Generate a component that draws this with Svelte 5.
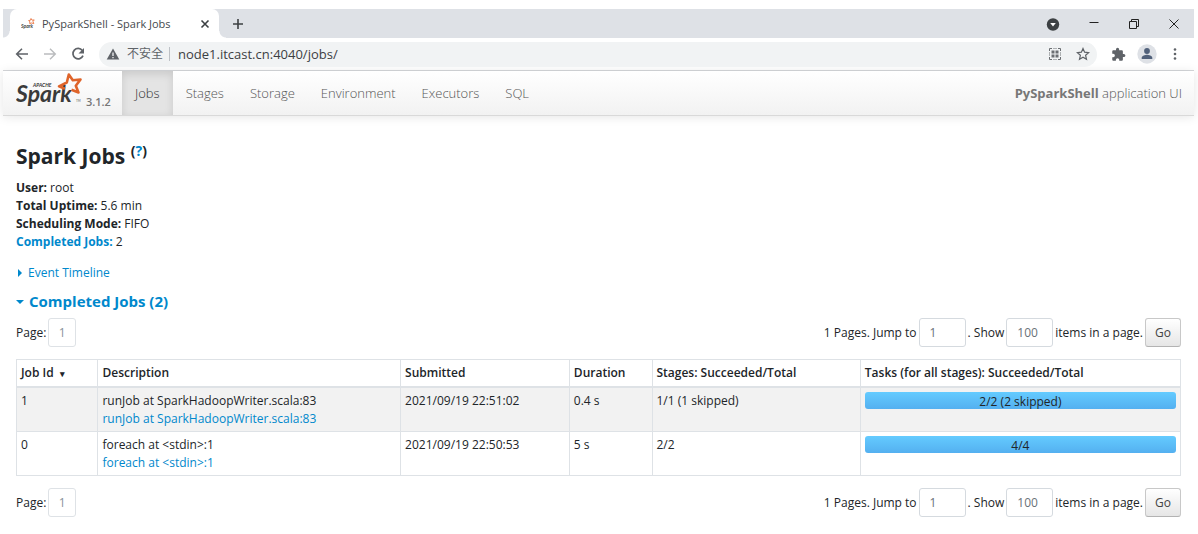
<script>
	const navItems = ['Jobs', 'Stages', 'Storage', 'Environment', 'Executors', 'SQL'];

	const summary = [
		{ label: 'User:', value: 'root' },
		{ label: 'Total Uptime:', value: '5.6 min' },
		{ label: 'Scheduling Mode:', value: 'FIFO' },
		{ label: 'Completed Jobs:', value: '2', link: true }
	];

	const jobs = [
		{
			id: 1,
			description: 'runJob at SparkHadoopWriter.scala:83',
			submitted: '2021/09/19 22:51:02',
			duration: '0.4 s',
			stages: '1/1 (1 skipped)',
			tasks: '2/2 (2 skipped)',
			progress: 100
		},
		{
			id: 0,
			description: 'foreach at <stdin>:1',
			submitted: '2021/09/19 22:50:53',
			duration: '5 s',
			stages: '2/2',
			tasks: '4/4',
			progress: 100
		}
	];

	let active = $state('Jobs');
	let address = $state('node1.itcast.cn:4040/jobs/');
</script>

{#snippet pager(where)}
	<div class="pager">
		<div class="pages">
			<span>Page:</span>
			<a class="pageLink" href="#page">1</a>
		</div>
		<form class="jump" onsubmit={(e) => e.preventDefault()}>
			<label for="jump-{where}">1 Pages. Jump to</label>
			<input id="jump-{where}" type="text" value="1" />
			<label for="size-{where}">. Show</label>
			<input id="size-{where}" type="text" value="100" />
			<span>items in a page.</span>
			<button class="go">Go</button>
		</form>
	</div>
{/snippet}

<div class="window">
	<header class="tabStrip">
		<div class="edge left"></div>
		<div class="tab">
			<svg viewBox="0 0 14 14" width="14" height="14">
				<text class="faviconText" x="0" y="11">Spark</text>
				<path d="M10 1.500l1 1.700 2.200-.3-1.200 1.700.8 2-2.300-.6-1.800.6.200-1.800-1.300-1.200 1.900-.4z" fill="none" stroke="#ec8152" />
			</svg>
			<span class="tabTitle">PySparkShell - Spark Jobs</span>
			<button class="iconBtn" aria-label="Close tab">
				<svg viewBox="0 0 10 10" width="10" height="10"><path d="M1.500 1.500l7 7M8.500 1.500l-7 7" stroke="#3c4043" stroke-width="1.600" /></svg>
			</button>
		</div>
		<div class="edge right"></div>
		<button class="iconBtn newTab" aria-label="New tab">
			<svg viewBox="0 0 12 12" width="12" height="12"><path d="M6 1v10M1 6h10" stroke="#3c4043" stroke-width="1.600" /></svg>
		</button>
		<div class="windowButtons">
			<button class="iconBtn" aria-label="Search tabs">
				<svg viewBox="0 0 14 14" width="14" height="14"><circle cx="7" cy="7.500" r="6.200" fill="#3c4043" /><path d="M4.200 6h5.600L7 9.500z" fill="#fff" /></svg>
			</button>
			<button class="iconBtn" aria-label="Minimize">
				<svg viewBox="0 0 12 12" width="12" height="12"><path d="M1.500 4.500h9" stroke="#222" /></svg>
			</button>
			<button class="iconBtn" aria-label="Restore">
				<svg viewBox="0 0 12 12" width="12" height="12" fill="none" stroke="#222"><path d="M1.500 3.500h7v7h-7zM3.500 3.500v-2h7v7h-2" /></svg>
			</button>
			<button class="iconBtn" aria-label="Close">
				<svg viewBox="0 0 12 12" width="12" height="12"><path d="M1.500 1.500l9 9M10.500 1.500l-9 9" stroke="#222" /></svg>
			</button>
		</div>
	</header>

	<div class="toolbar">
		<button class="iconBtn" aria-label="Back">
			<svg viewBox="0 0 14 14" width="14" height="14" fill="none" stroke="#5f6368" stroke-width="1.600"><path d="M13 7H2M7 1.700L1.700 7 7 12.300" /></svg>
		</button>
		<button class="iconBtn" aria-label="Forward">
			<svg viewBox="0 0 14 14" width="14" height="14" fill="none" stroke="#babcbe" stroke-width="1.400"><path d="M1 7h11M7 1.700L12.300 7 7 12.300" /></svg>
		</button>
		<button class="iconBtn" aria-label="Reload">
			<svg viewBox="0 0 14 14" width="14" height="14"><path d="M11.300 3.500A5.200 5.200 0 1 0 12 8.600" fill="none" stroke="#5f6368" stroke-width="1.700" /><path d="M13 1v5.500H7.500z" fill="#5f6368" /></svg>
		</button>
		<div class="addressBar">
			<svg viewBox="0 0 14 14" width="14" height="14"><path d="M7 1.500L13.300 12.500H.7z" fill="#5f6368" /><path d="M7 5.500v3.500M7 10v1.300" stroke="#f1f3f4" stroke-width="1.300" /></svg>
			<span class="insecure">不安全</span>
			<input class="url" type="text" aria-label="Address" bind:value={address} />
			<button class="iconBtn" aria-label="QR code">
				<svg viewBox="0 0 14 14" width="14" height="14" fill="none" stroke="#6b6e72"><path d="M1.500 4V1.500H4M10 1.500h2.500V4M12.500 10v2.500H10M4 12.500H1.500V10" /><path d="M5.500 1.500h3M5.500 12.500h3M1.500 5.500v3M12.500 5.500v3" stroke-dasharray="1 1" /><path d="M3.500 3.500h3v3h-3zM7.500 3.500h3v3h-3zM3.500 7.500h3v3h-3zM7.500 7.500h3v3h-3z" fill="#6b6e72" stroke="none" /></svg>
			</button>
			<button class="iconBtn" aria-label="Bookmark">
				<svg viewBox="0 0 14 14" width="14" height="14"><path d="M7 1.500l1.600 3.700 4 .4-3 2.700.9 4L7 10.200l-3.500 2.100.9-4-3-2.700 4-.4z" fill="none" stroke="#5f6368" stroke-width="1.200" /></svg>
			</button>
		</div>
		<div class="extras">
			<button class="iconBtn" aria-label="Extensions">
				<svg viewBox="0 0 24 24" width="15" height="15"><path d="M20.500 11H19V7c0-1.100-.9-2-2-2h-4V3.500a2.500 2.500 0 0 0-5 0V5H4c-1.100 0-2 .9-2 2v3.800h1.500a2.700 2.700 0 0 1 0 5.400H2V20c0 1.100.9 2 2 2h3.800v-1.500a2.700 2.700 0 0 1 5.400 0V22H17c1.100 0 2-.9 2-2v-4h1.500a2.500 2.500 0 0 0 0-5z" fill="#5f6368" /></svg>
			</button>
			<button class="iconBtn" aria-label="Profile">
				<svg viewBox="0 0 20 20" width="20" height="20"><circle cx="10" cy="10" r="9.700" fill="#dee1e6" /><circle cx="10" cy="7" r="2.900" fill="#50607a" /><path d="M4.700 15v-1.300c0-2 3.500-3 5.300-3s5.300 1 5.300 3V15z" fill="#50607a" /></svg>
			</button>
			<button class="iconBtn" aria-label="Menu">
				<svg viewBox="0 0 14 14" width="14" height="14" fill="#5f6368"><circle cx="7" cy="2.500" r="1.300" /><circle cx="7" cy="7" r="1.300" /><circle cx="7" cy="11.500" r="1.300" /></svg>
			</button>
		</div>
	</div>

	<nav class="navbar">
		<a class="brand" href="#home">
			<svg viewBox="0 0 68 42" width="68" height="42">
				<text class="apache" x="17" y="16">APACHE</text>
				<text class="spark" x="0" y="31">Spark</text>
				<path
					d="M49 17.800L43 15.300 50.800 11.500 52.800 3.500 56.800 9.300 64.500 8.500 59.800 14.800 62.500 21.500 55.500 18.800"
					fill="none"
					stroke="#df642a"
					stroke-width="2.600"
					stroke-linejoin="round"
				/>
				<text class="tm" x="60" y="31">TM</text>
			</svg>
			<span class="version">3.1.2</span>
		</a>
		{#each navItems as item}
			<a class="navItem" class:active={active === item} href="#{item}" onclick={() => (active = item)}>{item}</a>
		{/each}
		<p class="appName"><strong>PySparkShell</strong> application UI</p>
	</nav>

	<main>
		<h3>Spark Jobs <sup>(<a href="#help">?</a>)</sup></h3>
		<ul class="summary">
			{#each summary as row}
				<li>
					{#if row.link}<a href="#completed"><strong>{row.label}</strong></a>{:else}<strong>{row.label}</strong>{/if}
					{row.value}
				</li>
			{/each}
		</ul>

		<a class="timeline" href="#timeline">
			<svg viewBox="0 0 8 8" width="8" height="8"><path d="M2 0l4 4-4 4z" fill="#0088cc" /></svg>
			Event Timeline
		</a>
		<h4>
			<a href="#completed">
				<svg viewBox="0 0 8 8" width="8" height="8"><path d="M0 3h8L4 7z" fill="#0088cc" /></svg>
				Completed Jobs (2)
			</a>
		</h4>

		{@render pager('top')}

		<table>
			<colgroup>
				<col class="colId" />
				<col class="colDescription" />
				<col class="colSubmitted" />
				<col class="colDuration" />
				<col class="colStages" />
				<col />
			</colgroup>
			<thead>
				<tr>
					<th>Job Id <span class="sort">▾</span></th>
					<th>Description</th>
					<th>Submitted</th>
					<th>Duration</th>
					<th>Stages: Succeeded/Total</th>
					<th>Tasks (for all stages): Succeeded/Total</th>
				</tr>
			</thead>
			<tbody>
				{#each jobs as job}
					<tr>
						<td>{job.id}</td>
						<td>{job.description}<br /><a href="#job-{job.id}">{job.description}</a></td>
						<td>{job.submitted}</td>
						<td>{job.duration}</td>
						<td>{job.stages}</td>
						<td>
							<div class="progress">
								<div class="bar" style="width: {job.progress}%"></div>
								<span>{job.tasks}</span>
							</div>
						</td>
					</tr>
				{/each}
			</tbody>
		</table>

		{@render pager('bottom')}
	</main>
</div>

<style>
	:global(body) {
		margin: 0;
		background: #fff;
	}

	.window {
		padding: 9px 4px 0 3px;
		font: 12px/18px 'Open Sans', 'Noto Sans CJK SC', sans-serif;
		color: #212529;
	}

	a {
		color: #0088cc;
		text-decoration: none;
	}

	button,
	input {
		font: inherit;
		color: inherit;
		box-sizing: border-box;
	}

	svg {
		display: block;
		flex: none;
	}

	.iconBtn {
		display: flex;
		padding: 0;
		border: 0;
		background: none;
	}

	/* browser chrome */
	.tabStrip {
		display: flex;
		align-items: center;
		height: 29px;
		background: #dee1e6;
	}

	/* the flared feet of the tab */
	.edge {
		align-self: flex-end;
		width: 7px;
		height: 7px;
	}

	.edge.left {
		background: radial-gradient(circle at 0 0, #dee1e6 6px, #fff 7px);
	}

	.edge.right {
		background: radial-gradient(circle at 100% 0, #dee1e6 6px, #fff 7px);
	}

	.tab {
		display: flex;
		align-items: center;
		align-self: stretch;
		box-sizing: border-box;
		width: 209px;
		padding: 0 9px 0 11px;
		background: #fff;
		border-radius: 7px 7px 0 0;
	}

	.faviconText {
		font: italic 700 5px Lato, sans-serif;
		fill: #444;
	}

	.tabTitle {
		flex: 1;
		margin-left: 7px;
		font-size: 11px;
		color: #45494d;
		white-space: nowrap;
	}

	.newTab {
		margin-left: 6px;
	}

	.windowButtons {
		display: flex;
		align-items: center;
		gap: 28px;
		margin-left: auto;
		padding-right: 14px;
	}

	.toolbar {
		display: flex;
		align-items: center;
		gap: 14px;
		height: 32px;
		padding: 0 12px;
		border-bottom: 1px solid #d5d7da;
	}

	.addressBar {
		display: flex;
		flex: 1;
		align-items: center;
		gap: 14px;
		height: 25px;
		padding: 0 7px;
		border-radius: 13px;
		background: #f1f3f4;
	}

	.insecure {
		margin-left: -7px;
		padding-right: 6px;
		border-right: 1px solid #bdc1c6;
		line-height: 14px;
		color: #5f6368;
	}

	.url {
		flex: 1;
		min-width: 0;
		margin-left: -6px;
		padding: 0;
		border: 0;
		background: none;
		font-size: 13px;
		color: #3c4043;
	}

	.extras {
		display: flex;
		align-items: center;
		gap: 11px;
	}

	/* spark navbar */
	.navbar {
		display: flex;
		align-items: stretch;
		height: 44px;
		background: linear-gradient(#fff, #f2f2f2);
		border-bottom: 1px solid #d9d9d9;
		box-shadow: 0 1px 10px rgba(0, 0, 0, 0.1);
		font-size: 13px;
		color: #777;
	}

	.brand {
		display: flex;
		box-sizing: border-box;
		width: 119px;
		padding-left: 13px;
	}

	.apache {
		font: italic 700 5px Lato, sans-serif;
		fill: #333;
	}

	.spark {
		font: italic 700 23px Lato, sans-serif;
		fill: #3a3a3a;
	}

	.tm {
		font: 3px Lato, sans-serif;
		fill: #555;
	}

	.version {
		margin: 22px 0 0 2px;
		font-size: 11px;
		font-weight: 600;
		color: #777;
	}

	.navItem {
		padding: 0 13px;
		font-weight: 300;
		line-height: 45px;
		color: #555;
	}

	.navItem.active {
		background: #e4e4e4;
		box-shadow: inset 0 3px 8px rgba(0, 0, 0, 0.12);
		color: #333;
	}

	.appName {
		margin: 0 12px 0 auto;
		font-weight: 300;
		line-height: 45px;
		color: #555;
	}

	.appName strong {
		font-weight: 700;
		color: #777;
	}

	/* page */
	main {
		padding: 26px 13px 16px;
	}

	h3 {
		margin: 0 0 9px;
		font-size: 21px;
		line-height: 28px;
	}

	sup {
		font-size: 14px;
		line-height: 0;
	}

	.summary {
		margin: 0;
		padding: 0;
		list-style: none;
	}

	.timeline {
		display: flex;
		align-items: center;
		gap: 4px;
		margin-top: 13px;
	}

	h4 {
		margin: 9px 0 7px;
		font-size: 15px;
		line-height: 20px;
	}

	h4 a {
		display: flex;
		align-items: center;
		gap: 5px;
	}

	.pager,
	.pages,
	.jump {
		display: flex;
		align-items: center;
	}

	.pager {
		justify-content: space-between;
	}

	.pages,
	.jump {
		gap: 2px;
	}

	.pageLink {
		box-sizing: border-box;
		width: 28px;
		height: 29px;
		border: 1px solid #dee2e6;
		border-radius: 3px;
		line-height: 28px;
		text-align: center;
		color: #8a939b;
	}

	.jump input {
		width: 47px;
		height: 29px;
		padding: 0 10px;
		border: 1px solid #d5dadf;
		border-radius: 3px;
		color: #6a7178;
	}

	.go {
		width: 36px;
		height: 29px;
		padding: 0;
		border: 1px solid #c8c8c8;
		border-bottom-color: #b3b3b3;
		border-radius: 3px;
		background: linear-gradient(#fff, #e6e6e6);
		color: #444;
	}

	table {
		width: 100%;
		margin: 12px 0;
		border-collapse: collapse;
		table-layout: fixed;
	}

	.colId {
		width: 7%;
	}

	.colDescription {
		width: 26%;
	}

	.colSubmitted {
		width: 14.5%;
	}

	.colDuration {
		width: 7.1%;
	}

	.colStages {
		width: 17.9%;
	}

	th,
	td {
		padding: 4px 4px 3px;
		border: 1px solid #dee2e6;
		text-align: left;
		vertical-align: top;
		white-space: nowrap;
	}

	th {
		border-bottom-width: 2px;
		font-weight: 600;
	}

	tbody tr:nth-child(odd) {
		background: #f2f2f2;
	}

	.sort {
		margin-left: 3px;
		font-size: 9px;
	}

	.progress {
		position: relative;
		height: 17px;
		border-radius: 3px;
		overflow: hidden;
		line-height: 19px;
		text-align: center;
	}

	.bar {
		height: 100%;
		background: linear-gradient(#64cbff, #54b0f0);
	}

	.progress span {
		position: absolute;
		inset: 0;
	}
</style>
